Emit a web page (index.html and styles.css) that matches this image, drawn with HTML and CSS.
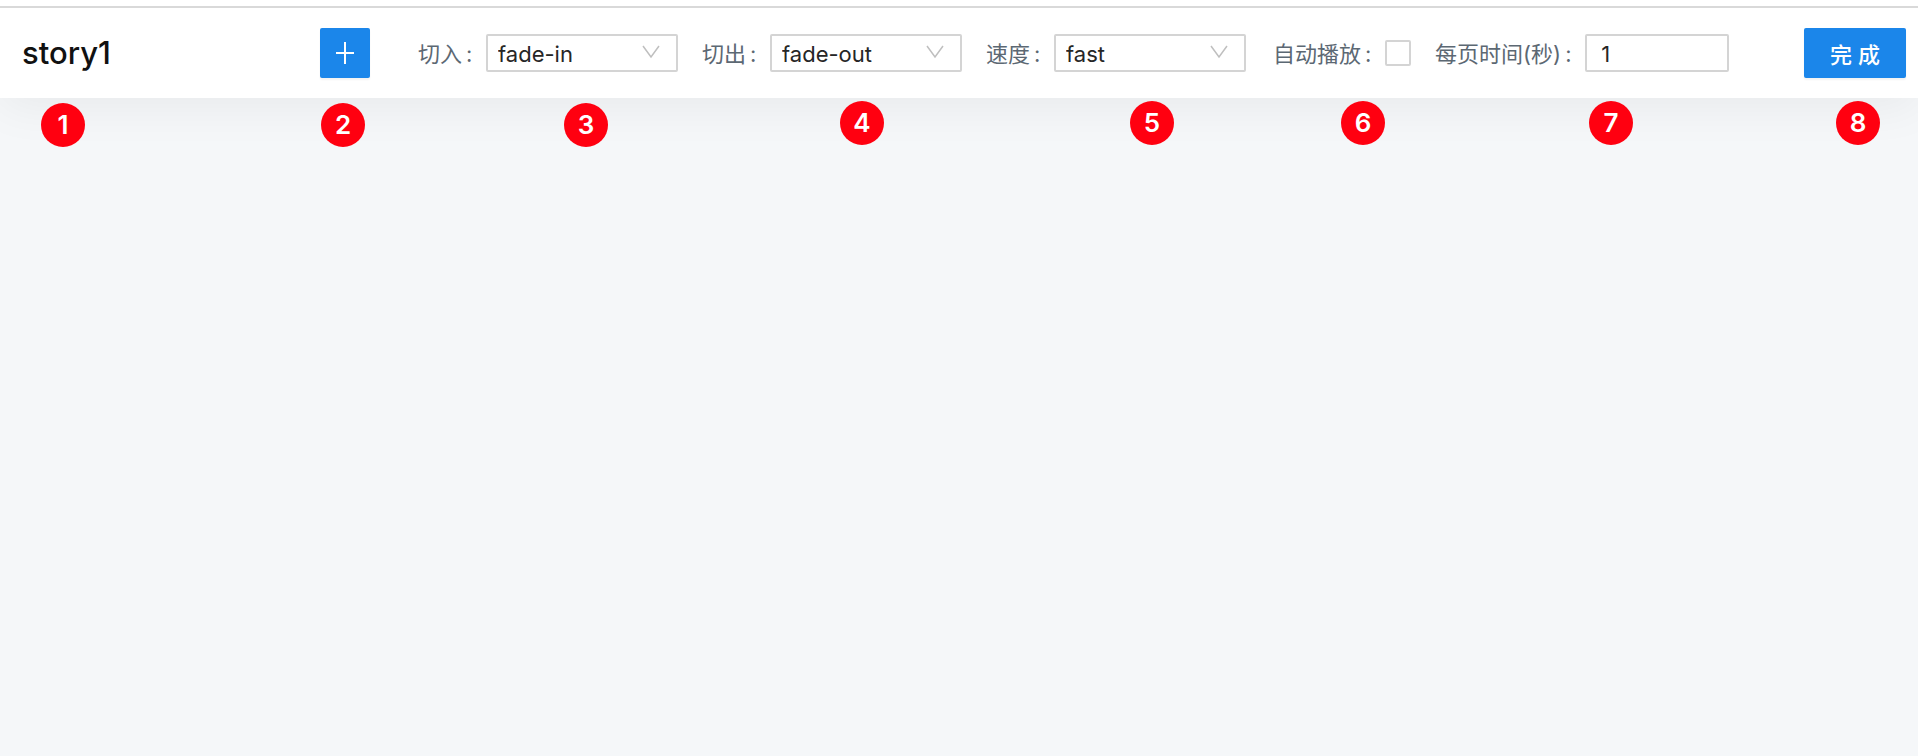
FILE: index.html
```html
<!DOCTYPE html>
<html lang="zh-CN">
<head>
<meta charset="utf-8">
<title>story1</title>
<link rel="stylesheet" href="styles.css">
</head>
<body>
<header class="topbar">
  <div class="toolbar">
    <div class="title-cell anchor">
      <h1 class="title">story1</h1>
      <span class="badge badge-title">1</span>
    </div>
    <div class="anchor">
      <button class="btn btn-icon" type="button" aria-label="添加">
        <svg width="20" height="24" viewBox="0 0 20 24" aria-hidden="true"><path d="M10 1v22M1 12h18" fill="none" stroke="#fff" stroke-width="2"/></svg>
      </button>
      <span class="badge badge-add">2</span>
    </div>
    <form class="fields">
      <div class="group">
        <div class="field anchor">
          <label class="label" for="enter">切入<span class="colon">:</span></label>
          <div class="select-wrap">
            <select class="control" id="enter"><option>fade-in</option></select>
            <svg class="arrow" width="18" height="14" viewBox="0 0 18 14" aria-hidden="true"><path d="M1 1l8 11 8-11" fill="none" stroke="#bfbfbf" stroke-width="1.5"/></svg>
          </div>
          <span class="badge badge-enter">3</span>
        </div>
        <div class="field anchor">
          <label class="label" for="leave">切出<span class="colon">:</span></label>
          <div class="select-wrap">
            <select class="control" id="leave"><option>fade-out</option></select>
            <svg class="arrow" width="18" height="14" viewBox="0 0 18 14" aria-hidden="true"><path d="M1 1l8 11 8-11" fill="none" stroke="#bfbfbf" stroke-width="1.5"/></svg>
          </div>
          <span class="badge badge-leave">4</span>
        </div>
        <div class="field anchor">
          <label class="label" for="speed">速度<span class="colon">:</span></label>
          <div class="select-wrap">
            <select class="control" id="speed"><option>fast</option></select>
            <svg class="arrow" width="18" height="14" viewBox="0 0 18 14" aria-hidden="true"><path d="M1 1l8 11 8-11" fill="none" stroke="#bfbfbf" stroke-width="1.5"/></svg>
          </div>
          <span class="badge badge-speed">5</span>
        </div>
      </div>
      <div class="group">
        <div class="field anchor">
          <label class="label" for="autoplay">自动播放<span class="colon">:</span></label>
          <input class="check" id="autoplay" type="checkbox">
          <span class="badge badge-autoplay">6</span>
        </div>
        <div class="field anchor">
          <label class="label" for="seconds">每页时间(秒)<span class="colon">:</span></label>
          <input class="control control-number" id="seconds" type="text" inputmode="numeric" value="1">
          <span class="badge badge-seconds">7</span>
        </div>
      </div>
    </form>
    <div class="done-cell anchor">
      <button class="btn btn-done" type="button">完 成</button>
      <span class="badge badge-done">8</span>
    </div>
  </div>
</header>
</body>
</html>
```

FILE: styles.css
```css
* {
  box-sizing: border-box;
}

body {
  margin: 0;
  min-height: 100vh;
  background: #f5f7f9;
  font-family: Inter, "Noto Sans CJK SC", sans-serif;
  font-size: 22px;
}

.topbar {
  padding-top: 6px;
  background: #fff;
  box-shadow: 0 8px 48px rgba(0, 0, 0, 0.06);
}

.toolbar {
  display: flex;
  align-items: center;
  padding: 20px 12px 20px 22px;
  border-top: 2px solid #d9d9d9;
}

.anchor {
  position: relative;
  display: flex;
  align-items: center;
  height: 50px;
}

.title-cell {
  width: 298px;
}

.title {
  margin: 0;
  color: #111;
  font-size: 31px;
  font-weight: 500;
  line-height: 40px;
}

.btn {
  display: flex;
  align-items: center;
  justify-content: center;
  height: 50px;
  padding: 0;
  border: 0;
  border-radius: 2px;
  background: #1b86ea;
  box-shadow: 0 2px 2px rgba(0, 0, 0, 0.05);
  color: #fff;
  font: inherit;
  white-space: pre;
}

.btn-icon {
  width: 50px;
}

.btn-done {
  width: 102px;
  font-weight: 500;
}

.fields {
  display: flex;
  gap: 27px;
  margin-left: 48px;
}

.group {
  display: flex;
  gap: 24px;
}

.label {
  padding-top: 2px;
  color: #5c6873;
  line-height: 32px;
  white-space: nowrap;
}

.colon {
  display: inline-block;
  width: 24px;
  padding-left: 4px;
}

.select-wrap {
  position: relative;
  display: flex;
}

.control {
  appearance: none;
  width: 192px;
  height: 38px;
  margin: 0;
  padding: 2px 12px 0 10px;
  border: 2px solid #d4d4d4;
  border-radius: 2px;
  background: #fff;
  color: #262626;
  font: inherit;
}

.control-number {
  width: 144px;
  padding-left: 14px;
}

.arrow {
  position: absolute;
  top: 11px;
  right: 18px;
  pointer-events: none;
}

.check {
  appearance: none;
  width: 26px;
  height: 26px;
  margin: 0;
  border: 2px solid #d4d4d4;
  border-radius: 2px;
  background: #fff;
}

.done-cell {
  margin-left: auto;
}

.badge {
  position: absolute;
  top: 73px;
  width: 44px;
  height: 44px;
  border-radius: 50%;
  background: #ff0010;
  color: #fff;
  font-size: 26px;
  font-weight: 600;
  line-height: 44px;
  text-align: center;
}

.badge-title {
  top: 75px;
  left: 19px;
}

.badge-add {
  top: 75px;
  left: 1px;
}

.badge-enter {
  top: 75px;
  left: 146px;
}

.badge-leave {
  left: 138px;
}

.badge-speed {
  left: 144px;
}

.badge-autoplay {
  left: 68px;
}

.badge-seconds {
  left: 154px;
}

.badge-done {
  left: 32px;
}
```
